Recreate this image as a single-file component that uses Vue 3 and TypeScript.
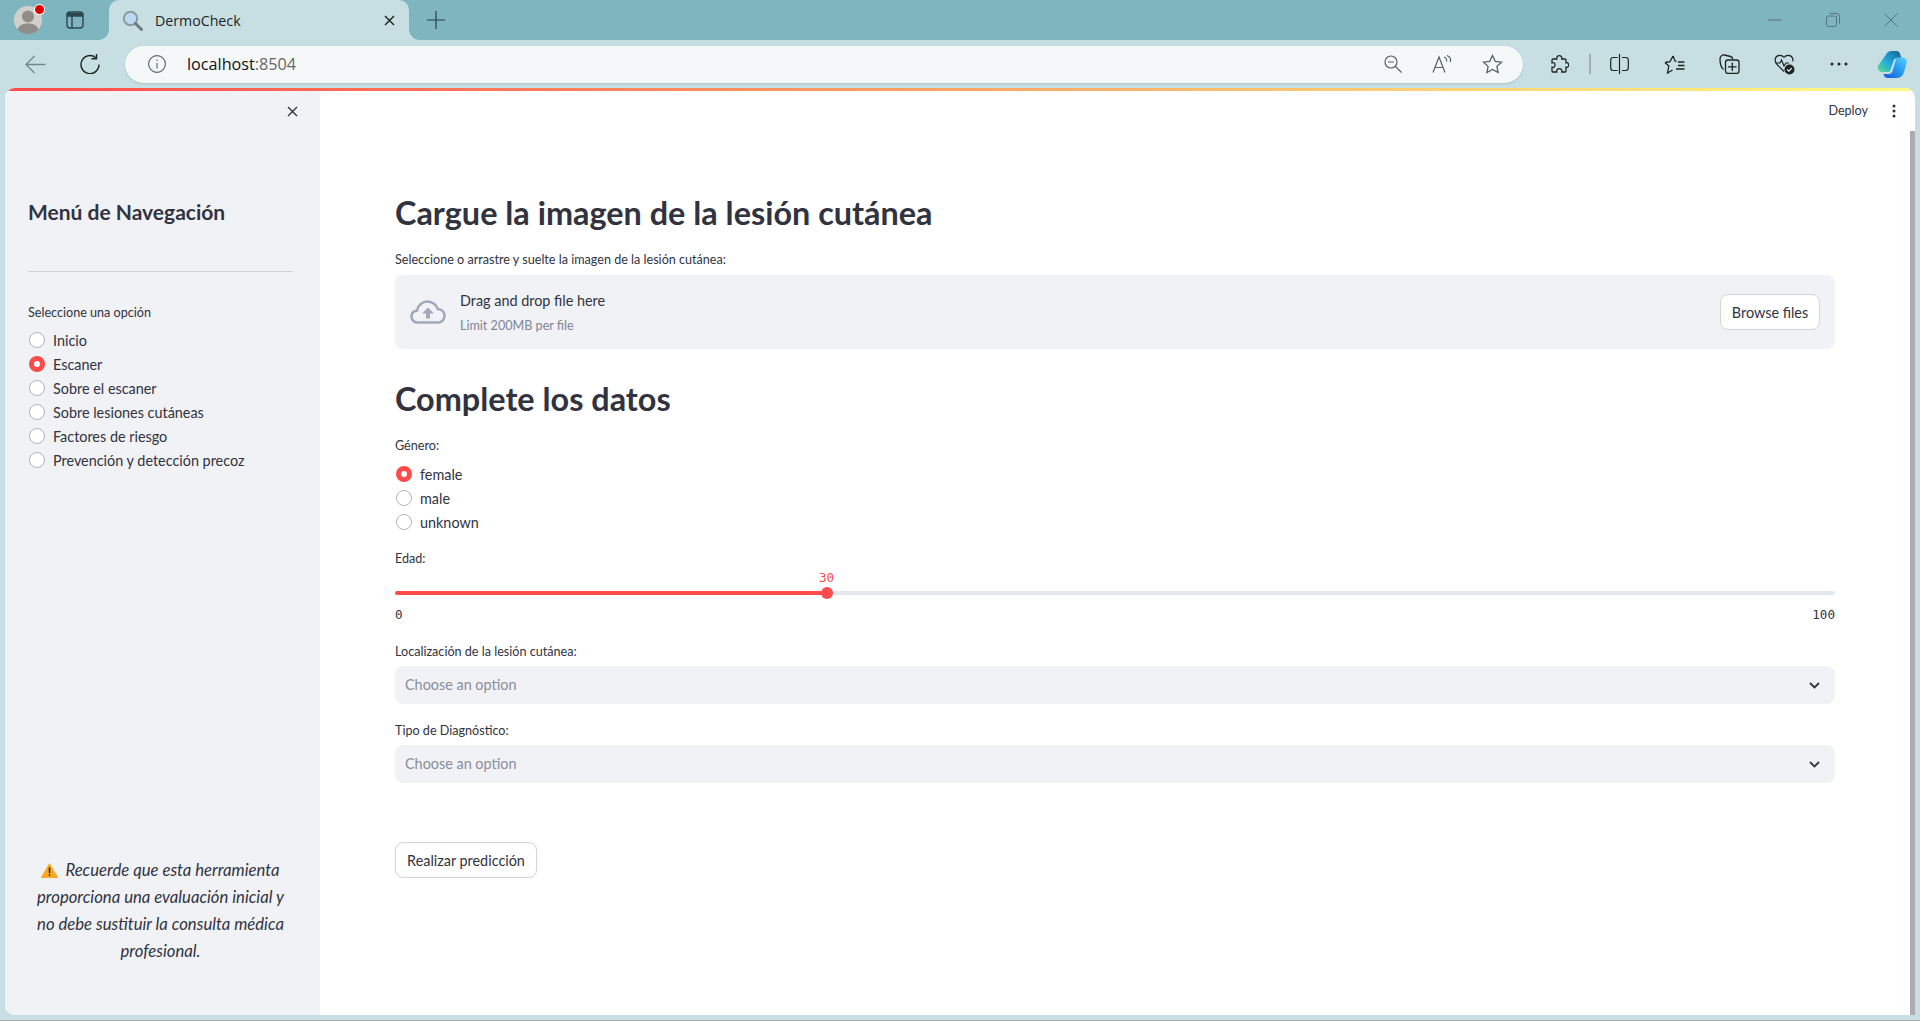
<script setup lang="ts">
const navOptions = [
  "Inicio",
  "Escaner",
  "Sobre el escaner",
  "Sobre lesiones cutáneas",
  "Factores de riesgo",
  "Prevención y detección precoz",
];
const genders = ["female", "male", "unknown"];
const selects = ["Localización de la lesión cutánea:", "Tipo de Diagnóstico:"];
</script>

<template>
  <div class="window">
    <div class="tabbar">
      <div class="avatar">
        <svg width="28" height="28" viewBox="0 0 28 28">
          <circle cx="14" cy="14" r="14" fill="#d3d0cc" />
          <circle cx="14" cy="10.500" r="6" fill="#8f8c89" />
          <path d="M3.500 23.500c1.500-4.500 5.500-6 10.500-6s9 1.500 10.500 6C22 26.500 18 28 14 28s-8-1.500-10.500-4.500z" fill="#8f8c89" />
        </svg>
        <span class="avatar-dot"></span>
      </div>
      <svg class="tabs-icon" width="18" height="18" viewBox="0 0 18 18" fill="none" stroke="#2b4751" stroke-width="1.400">
        <rect x="1" y="1" width="16" height="16" rx="3" />
        <path d="M1.500 2.500h15V5h-15z" fill="#2b4751" />
        <path d="M6 5v12" />
      </svg>
      <div class="tab">
        <svg width="21" height="21" viewBox="0 0 21 21" class="tab-icon">
          <circle cx="8.500" cy="8.500" r="6.700" fill="#b9d9f0" stroke="#8b99a1" stroke-width="2" />
          <path d="M13.500 13.500l6 6" stroke="#6d7a82" stroke-width="3" stroke-linecap="round" />
        </svg>
        <span class="tab-title">DermoCheck</span>
        <svg width="11" height="11" viewBox="0 0 11 11" stroke="#1b1b1b" stroke-width="1.400">
          <path d="M1 1l9 9M10 1l-9 9" />
        </svg>
      </div>
      <svg class="new-tab" width="18" height="18" viewBox="0 0 18 18" stroke="#25404a" stroke-width="1.200">
        <path d="M9 0v18M0 9h18" />
      </svg>
      <div class="win-controls">
        <svg width="14" height="14" viewBox="0 0 14 14" stroke="#54757d"><path d="M0 7h13.500" /></svg>
        <svg width="14" height="14" viewBox="0 0 14 14" fill="none" stroke="#54757d">
          <rect x=".5" y="3" width="10" height="10.500" rx="2" />
          <path d="M3.500.5h7a3 3 0 0 1 3 3v7" />
        </svg>
        <svg width="14" height="14" viewBox="0 0 14 14" stroke="#54757d"><path d="M.5.500l13 13M13.500.500l-13 13" /></svg>
      </div>
    </div>

    <div class="toolbar">
      <svg class="nav-back" width="21" height="19" viewBox="0 0 21 19" fill="none" stroke="#72878c" stroke-width="1.300">
        <path d="M20.500 9.500H1M9.500 1L1 9.500l8.500 8.500" />
      </svg>
      <svg class="nav-reload" width="20" height="20" viewBox="0 0 20 20" fill="none" stroke="#1c2426" stroke-width="1.400">
        <path d="M15.800 3.700A9 9 0 1 0 19 10.500" />
        <path d="M16.500 0v4.700h-5" />
      </svg>
      <div class="address">
        <svg width="18" height="18" viewBox="0 0 18 18" fill="none" stroke="#5a5f61" stroke-width="1.100">
          <circle cx="9" cy="9" r="8.400" />
          <path d="M9 8v5.500M9 4.500V6" />
        </svg>
        <span class="url">localhost<span class="url-port">:8504</span></span>
        <div class="address-icons">
          <svg width="18" height="18" viewBox="0 0 18 18" fill="none" stroke="#5a5f61" stroke-width="1.200">
            <circle cx="7" cy="7" r="6" /><path d="M11.500 11.500l6 6M4 7h6" />
          </svg>
          <svg width="20" height="18" viewBox="0 0 20 18" fill="none" stroke="#5a5f61" stroke-width="1.200">
            <path d="M1 17.500L7 2l6 15.500M3 12.500h8M12 2c2 .5 3 2.500 2.500 4.500M15 .5c2.500 1 4 3.500 3.300 6.500" />
          </svg>
          <svg width="21" height="20" viewBox="0 0 21 20" fill="none" stroke="#5a5f61" stroke-width="1.300">
            <path d="M10.500 1.500l2.800 5.800 6.200.8-4.600 4.300 1.200 6.200-5.600-3.100-5.600 3.100 1.200-6.200L1.500 8.100l6.200-.8z" />
          </svg>
        </div>
      </div>
      <div class="toolbar-icons">
        <svg width="19" height="19" viewBox="0 0 19 19" fill="none" stroke="#1c2426" stroke-width="1.300">
          <path d="M6.800 4C6.200 1.500 8 .7 9.300 .7S12.400 1.500 11.800 4H15a1 1 0 0 1 1 1v2.800c2.200-.6 2.700 1.200 2.700 2.200s-.5 2.800-2.700 2.200V16a1 1 0 0 1-1 1h-3.200c.4-2.200-.8-3.400-2.500-3.400s-2.900 1.200-2.500 3.400H3a1 1 0 0 1-1-1v-3.800c2 .6 3-.7 3-2.200S4 7.200 2 7.800V5a1 1 0 0 1 1-1z" />
        </svg>
        <span class="toolbar-sep"></span>
        <svg class="ti-split" width="19" height="20" viewBox="0 0 19 20" fill="none" stroke="#1c2426" stroke-width="1.200">
          <path d="M7.500 3.500H3A2.500 2.500 0 0 0 .7 6v8A2.500 2.500 0 0 0 3 16.500h4.500M12 3.500h4A2.500 2.500 0 0 1 18.300 6v8a2.500 2.500 0 0 1-2.300 2.500h-4M9.500 0v20" />
        </svg>
        <svg class="ti-fav" width="21" height="19" viewBox="0 0 21 19" fill="none" stroke="#1c2426" stroke-width="1.300">
          <path d="M9 1l2.200 5.200 1.300.1M1 7.500l5-.9L9 1M1 7.500l3.800 3.600-1.300 6.900 5-3M14 7h6.500M14 10.500h6.500M12 14h8.500" />
        </svg>
        <svg class="ti-coll" width="21" height="20" viewBox="0 0 21 20" fill="none" stroke="#1c2426" stroke-width="1.300">
          <path d="M4.500 15.500C2.500 14 1 9.500 1 5c0-2.500 2-4.500 4.500-4l6 1.500c1.300.3 2 1 2.300 2.500" />
          <rect x="6.500" y="6" width="13.500" height="13.500" rx="2.500" />
          <path d="M13.300 8.500v8.500M9 12.800h8.500" />
        </svg>
        <svg class="ti-heart" width="21" height="21" viewBox="0 0 21 21" fill="none" stroke="#1c2426" stroke-width="1.200">
          <path d="M10 3.500C8 .5 3 .5 1.500 4c-1 2.500 0 4.500 1.500 6.500l7 7M10 3.500c2-3 7-3 8.500.5.400 1 .5 2 .3 3.500M1 9h5l1.500-3 2.500 6 2-3h3" />
          <circle cx="15.500" cy="15.500" r="5" fill="#1c2426" stroke="none" />
          <path d="M13.200 15.500l1.700 1.700 2.800-3" stroke="#fff" stroke-width="1.100" />
        </svg>
        <svg class="ti-more" width="18" height="4" viewBox="0 0 18 4" fill="#1c2426">
          <circle cx="2" cy="2" r="1.500" /><circle cx="9" cy="2" r="1.500" /><circle cx="16" cy="2" r="1.500" />
        </svg>
        <svg class="ti-copilot" width="30" height="27" viewBox="0 0 30 27">
          <defs>
            <linearGradient id="copA" x1="0" y1="1" x2="1" y2="0">
              <stop offset="0" stop-color="#5fdc8f" />
              <stop offset="0.45" stop-color="#22a9dd" />
              <stop offset="1" stop-color="#165f8f" />
            </linearGradient>
            <linearGradient id="copB" x1="0" y1="1" x2="1" y2="0">
              <stop offset="0" stop-color="#1a56d8" />
              <stop offset="0.6" stop-color="#2aa6f2" />
              <stop offset="1" stop-color="#5fd0f5" />
            </linearGradient>
          </defs>
          <path d="M9 3.500C10 1.500 12 0 14.500 0h5c2 0 3.200 1.500 3.800 3.500l1 3.500h-4c-2 0-3.500 1.500-4 3.500l-3 9c-.5 1-1.500 1.500-3 1.500H5C2 20.500 0 18 1 15z" fill="url(#copA)" />
          <path d="M20 6.500h5.500c3 0 5 2.500 4.200 5.500L27 21c-.8 3-3.500 6-7 6h-9c-2.500 0-4-1.500-4.500-4h5c2 0 3.500-1 4-3l3-10c.5-2 .500-3.500 1.500-3.500z" fill="url(#copB)" />
        </svg>
      </div>
    </div>

    <div class="frame">
      <div class="rainbow"></div>
      <div class="frame-body">
        <aside class="sidebar">
          <svg class="side-close" width="11" height="11" viewBox="0 0 11 11" stroke="#31333f" stroke-width="1.400">
            <path d="M1 1l9 9M10 1l-9 9" />
          </svg>
          <h3 class="side-title">Menú de Navegación</h3>
          <hr class="side-rule" />
          <p class="label">Seleccione una opción</p>
          <div class="radio-list">
            <label v-for="opt in navOptions" :key="opt" class="radio-row">
              <span class="radio" :class="{ on: opt === 'Escaner' }"></span>
              <span>{{ opt }}</span>
            </label>
          </div>
          <p class="side-note">
            <svg class="warn" width="17" height="15" viewBox="0 0 17 15">
              <path d="M8.500.8L16.700 14.500H.3z" fill="#f9a825" stroke="#f9a825" stroke-linejoin="round" />
              <path d="M8.500 4.500v5.500M8.500 11.200v1.600" stroke="#222" stroke-width="1.500" />
            </svg>
            <em>Recuerde que esta herramienta proporciona una evaluación inicial y no debe sustituir la consulta médica profesional.</em>
          </p>
        </aside>

        <main class="main">
          <div class="topbar">
            <span class="deploy">Deploy</span>
            <svg width="4" height="14" viewBox="0 0 4 14" fill="#31333f">
              <circle cx="2" cy="2" r="1.500" /><circle cx="2" cy="7" r="1.500" /><circle cx="2" cy="12" r="1.500" />
            </svg>
          </div>
          <div class="content">
            <h2 class="heading">Cargue la imagen de la lesión cutánea</h2>
            <p class="label upload-label">Seleccione o arrastre y suelte la imagen de la lesión cutánea:</p>
            <div class="dropzone">
              <svg class="cloud" width="36" height="24" viewBox="0 0 36 24" fill="none">
                <path d="M9 22.500H7.500C3.500 22.500 1.500 19.500 1.500 16.500s2-5.500 5.500-6C8 5 12.500 1.500 17.500 1.500c5 0 9 3.500 10.200 7.500 4 .2 6.800 3 6.800 6.800s-3 6.700-6.500 6.700H9z" stroke="#a3a8b8" stroke-width="2.600" />
                <path d="M18 7.500l6 6h-4v5h-4v-5h-4z" fill="#a3a8b8" />
              </svg>
              <div class="drop-text">
                <span class="drop-title">Drag and drop file here</span>
                <span class="drop-limit">Limit 200MB per file</span>
              </div>
              <button class="btn browse">Browse files</button>
            </div>

            <h2 class="heading second">Complete los datos</h2>
            <p class="label gender-label">Género:</p>
            <div class="radio-list gender-list">
              <label v-for="g in genders" :key="g" class="radio-row">
                <span class="radio" :class="{ on: g === 'female' }"></span>
                <span>{{ g }}</span>
              </label>
            </div>

            <p class="label age-label">Edad:</p>
            <div class="slider">
              <div class="slider-fill"></div>
              <span class="slider-thumb"><span class="slider-value">30</span></span>
            </div>
            <div class="slider-ends"><span>0</span><span>100</span></div>

            <div v-for="s in selects" :key="s" class="select-field">
              <p class="label">{{ s }}</p>
              <div class="select">
                <span>Choose an option</span>
                <svg width="11" height="7" viewBox="0 0 11 7" fill="none" stroke="#31333f" stroke-width="1.800">
                  <path d="M1 1l4.500 4.500L10 1" />
                </svg>
              </div>
            </div>

            <button class="btn predict">Realizar predicción</button>
          </div>
          <span class="scrollbar"></span>
        </main>
      </div>
    </div>
  </div>
</template>

<style>
html,
body {
  margin: 0;
  overflow: hidden;
}
</style>

<style scoped>
* {
  box-sizing: border-box;
}
.window {
  width: 1920px;
  height: 1021px;
  display: flex;
  flex-direction: column;
  background: #c7dfe3;
  font-family: Lato, "Noto Sans", sans-serif;
  color: #31333f;
  overflow: hidden;
  box-shadow: inset 0 -1px 0 #a8a8ad;
}

/* ---------- browser chrome ---------- */
.tabbar {
  height: 40px;
  background: #7fb5bf;
  display: flex;
  align-items: center;
  padding-left: 14px;
  flex: none;
}
.avatar {
  position: relative;
  width: 28px;
  height: 28px;
}
.avatar-dot {
  position: absolute;
  top: -1px;
  right: -2px;
  width: 9px;
  height: 9px;
  border-radius: 50%;
  background: #e10000;
  box-shadow: 0 0 0 1px #fff;
}
.tabs-icon {
  margin-left: 24px;
}
.tab {
  position: relative;
  margin-left: 25px;
  width: 300px;
  height: 40px;
  background: #c7dfe3;
  border-radius: 10px 10px 0 0;
  display: flex;
  align-items: center;
  padding: 0 14px 0 13px;
  font-family: "Open Sans", sans-serif;
  font-size: 14.200px;
  color: #1c2426;
  flex: none;
}
.tab::before,
.tab::after {
  content: "";
  position: absolute;
  bottom: 0;
  width: 10px;
  height: 10px;
}
.tab::before {
  left: -10px;
  background: radial-gradient(circle at 0 0, #7fb5bf 9.500px, #c7dfe3 10px);
}
.tab::after {
  right: -10px;
  background: radial-gradient(circle at 100% 0, #7fb5bf 9.500px, #c7dfe3 10px);
}
.tab-title {
  margin-left: 12px;
  flex: 1;
}
.new-tab {
  margin-left: 18px;
}
.win-controls {
  margin-left: auto;
  display: flex;
  align-items: center;
  gap: 44px;
  padding-right: 22px;
}
.toolbar {
  height: 48px;
  flex: none;
  display: flex;
  align-items: center;
  padding-left: 25px;
}
.nav-reload {
  margin-left: 34px;
}
.address {
  margin-left: 25px;
  width: 1398px;
  height: 37px;
  background: #f4f8f9;
  border-radius: 19px;
  display: flex;
  align-items: center;
  padding-left: 23px;
  box-shadow: 0 1px 2px rgba(60, 90, 95, 0.2);
  flex: none;
}
.url {
  margin-left: 21px;
  font-family: "Open Sans", sans-serif;
  font-size: 16.200px;
  color: #111;
}
.url-port {
  color: #666;
}
.address-icons {
  margin-left: auto;
  display: flex;
  align-items: center;
  gap: 30px;
  padding-right: 20px;
}
.toolbar-icons {
  margin-left: 27px;
  display: flex;
  align-items: center;
}
.toolbar-sep {
  width: 2px;
  height: 20px;
  background: #9fb0b4;
  margin-left: 20px;
}
.ti-split {
  margin-left: 19px;
}
.ti-fav {
  margin-left: 35px;
}
.ti-coll {
  margin-left: 34px;
}
.ti-heart {
  margin-left: 34px;
}
.ti-more {
  margin-left: 35px;
}
.ti-copilot {
  margin-left: 29px;
}

/* ---------- page frame ---------- */
.frame {
  flex: none;
  width: 1910px;
  height: 927px;
  margin-left: 5px;
  background: #fff;
  border-radius: 10px 10px 0 10px;
  overflow: hidden;
  display: flex;
  flex-direction: column;
}
.rainbow {
  height: 3px;
  flex: none;
  background: linear-gradient(90deg, #ff4b4b, #fffd80);
}
.frame-body {
  flex: 1;
  display: flex;
  min-height: 0;
}

/* ---------- sidebar ---------- */
.sidebar {
  position: relative;
  width: 315px;
  flex: none;
  background: #f0f2f6;
  padding: 0 27px 0 23px;
  display: flex;
  flex-direction: column;
}
.side-close {
  position: absolute;
  top: 15px;
  right: 22px;
}
.side-title {
  margin: 107px 0 0;
  font-size: 21px;
  line-height: 28px;
  font-weight: 700;
}
.side-rule {
  border: 0;
  border-top: 1px solid #cfd0d4;
  margin: 45px 0 0;
}
.side-rule + .label {
  margin-top: 31px;
}
.label {
  margin: 0 0 -1px;
  padding-top: 1px;
  font-size: 12.600px;
  line-height: 18px;
}
.radio-list {
  display: flex;
  flex-direction: column;
  margin-top: 7px;
}
.radio-row {
  display: flex;
  align-items: center;
  height: 24px;
  font-size: 14.400px;
  gap: 8px;
}
.radio {
  width: 16px;
  height: 16px;
  margin-left: 1px;
  border-radius: 50%;
  background: #fff;
  border: 1px solid #b4b5b9;
  flex: none;
}
.radio.on {
  background: #fff;
  border: 5px solid #ff4b4b;
}
.side-note {
  margin: auto 0 0;
  padding-bottom: 50px;
  font-size: 16.700px;
  line-height: 27px;
  text-align: center;
}
.warn {
  vertical-align: -2px;
  margin-right: 7px;
}

/* ---------- main column ---------- */
.main {
  flex: 1;
  min-width: 0;
  position: relative;
  padding: 0 80px 0 75px;
}
.topbar {
  position: absolute;
  top: 12px;
  right: 19px;
  display: flex;
  align-items: center;
  gap: 24px;
}
.deploy {
  font-size: 12.600px;
}
.scrollbar {
  position: absolute;
  top: 40px;
  right: 0;
  bottom: 0;
  width: 5px;
  background: #adacb1;
}
.content {
  display: flex;
  flex-direction: column;
  align-items: stretch;
}
.heading {
  margin: 102px 0 0;
  font-size: 32.400px;
  line-height: 40px;
  font-weight: 700;
}
.upload-label {
  margin-top: 17px;
}
.dropzone {
  margin-top: 7px;
  height: 74px;
  border-radius: 8px;
  background: #f0f2f6;
  display: flex;
  align-items: center;
  padding: 0 15px;
}
.cloud {
  margin-right: 14px;
}
.drop-text {
  display: flex;
  flex-direction: column;
  flex: 1;
  gap: 6px;
  margin-top: 2px;
}
.drop-title {
  font-size: 14.400px;
  line-height: 20px;
}
.drop-limit {
  font-size: 12.600px;
  line-height: 18px;
  color: #808495;
}
.btn {
  height: 36px;
  background: #fff;
  border: 1px solid #d3d4d8;
  border-radius: 8px;
  font: inherit;
  font-size: 14.400px;
  color: #31333f;
  padding: 0 12px;
}
.browse {
  width: 100px;
  padding: 0;
}
.heading.second {
  margin-top: 30px;
}
.gender-label {
  margin-top: 17px;
}
.gender-list {
  margin-top: 8px;
}
.age-label {
  margin-top: 15px;
}
.slider {
  position: relative;
  margin-top: 24px;
  height: 4px;
  border-radius: 2px;
  background: #e4e7ef;
}
.slider-fill {
  width: 30%;
  height: 100%;
  border-radius: 2px;
  background: #ff4b4b;
}
.slider-thumb {
  position: absolute;
  left: 30%;
  top: -4px;
  margin-left: -6px;
  width: 12px;
  height: 12px;
  border-radius: 50%;
  background: #ff4b4b;
}
.slider-value {
  position: absolute;
  bottom: 13px;
  left: -2px;
  font-family: "DejaVu Sans Mono", monospace;
  font-size: 12.600px;
  line-height: 16px;
  color: #ff4b4b;
}
.slider-ends {
  display: flex;
  justify-content: space-between;
  margin-top: 12px;
  font-family: "DejaVu Sans Mono", monospace;
  font-size: 12.600px;
  line-height: 16px;
}
.select-field {
  margin-top: 20px;
}
.select-field + .select-field {
  margin-top: 18px;
}
.select-field .label {
  padding-top: 0;
  margin-bottom: 0;
}
.select {
  margin-top: 5px;
  height: 38px;
  border-radius: 8px;
  background: #f0f2f6;
  display: flex;
  align-items: center;
  justify-content: space-between;
  padding: 0 15px 0 10px;
  font-size: 14.400px;
  color: #8b8d97;
}
.select span {
  margin-top: -1px;
}
.predict {
  margin-top: 59px;
  align-self: flex-start;
  width: 142px;
  padding: 0;
}
</style>
